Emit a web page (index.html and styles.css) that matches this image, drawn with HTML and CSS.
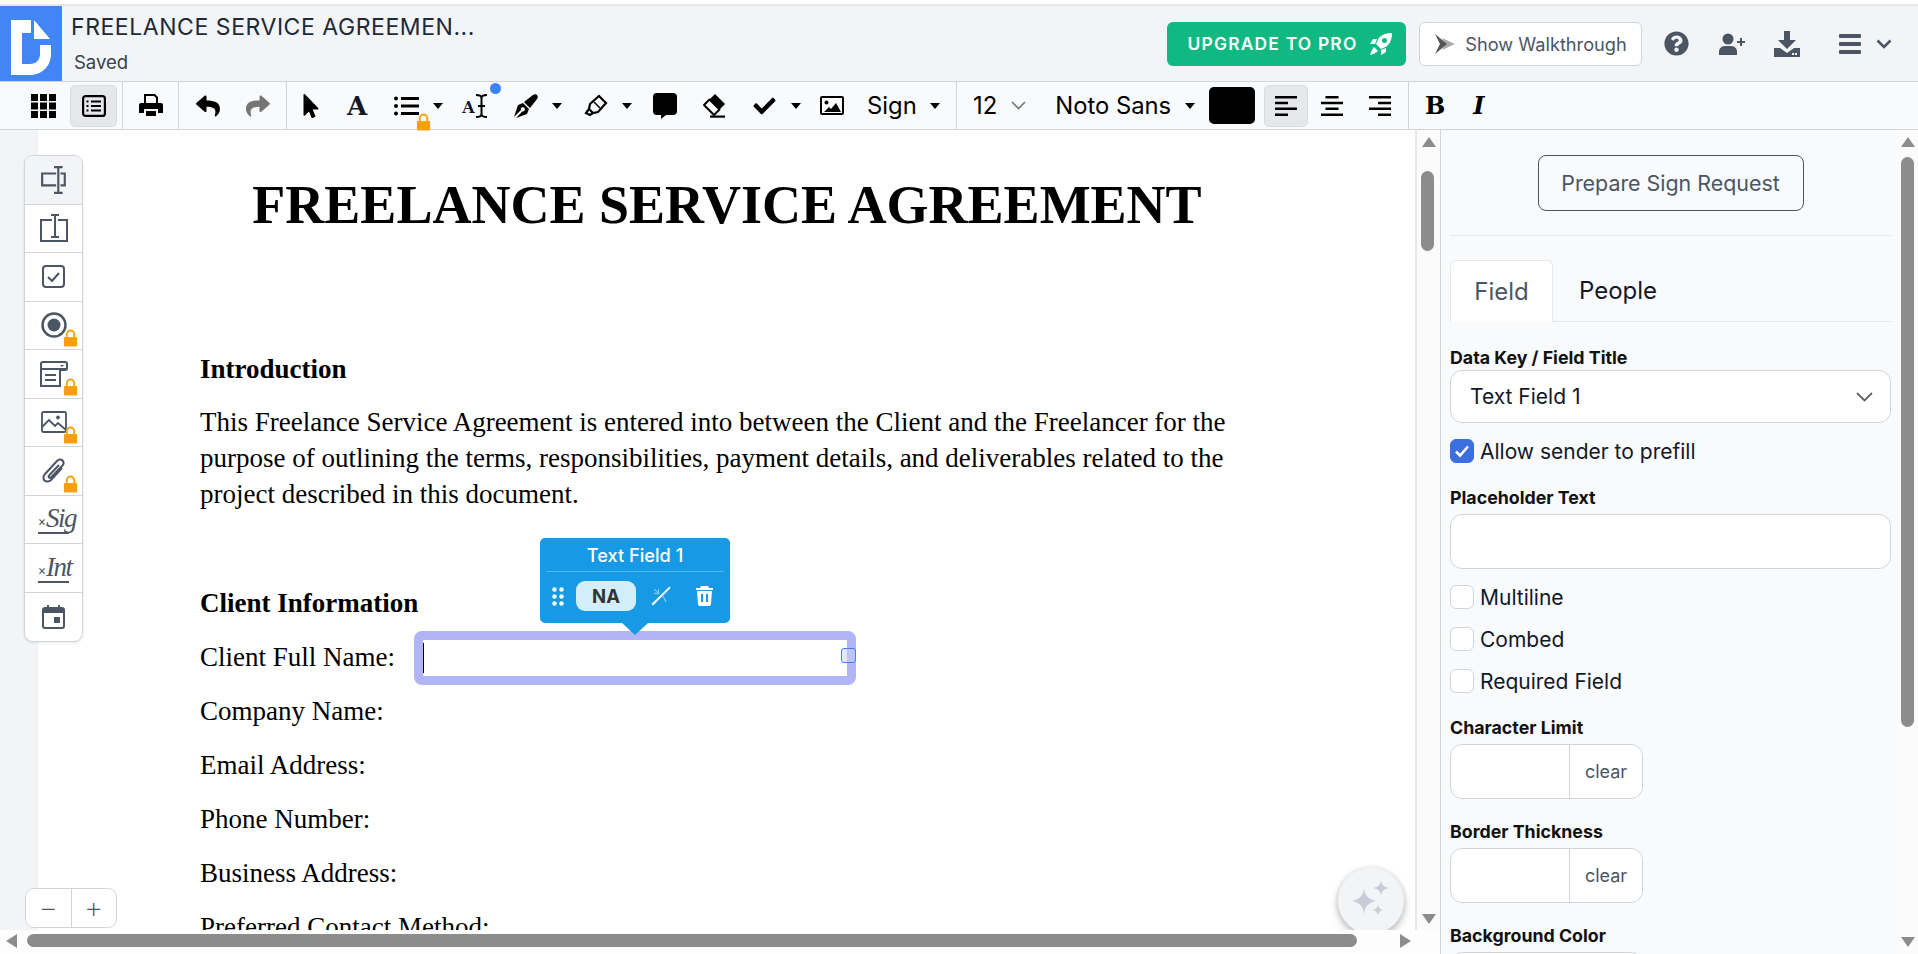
FILE: index.html
```html
<!DOCTYPE html>
<html lang="en">
<head>
  <meta charset="UTF-8">
  <title>Freelance Service Agreement</title>
  <link rel="stylesheet" href="styles.css">
</head>
<body>
<div class="app">

  <header class="header">
    <div class="logo">
      <svg width="62" height="75" viewBox="0 0 62 75"><path d="M11 14h20v13h-9v31h8c6 0 10-4 10-10v-9h11v9c0 12-9 21-21 21H11z" fill="#fff"/><path d="M34 14l16 19H34z" fill="#fff"/></svg>
    </div>
    <div class="doc-name">
      <div class="doc-title">FREELANCE SERVICE AGREEMEN...</div>
      <div class="doc-status">Saved</div>
    </div>
    <div class="header-actions">
      <button class="btn-upgrade">UPGRADE TO PRO
        <svg width="24" height="24" viewBox="0 0 24 24" fill="#fff"><path d="M23 1c-6 0-10 1.500-13.500 5.500L7 12l5 5 5.500-2.500C21.500 11 23 7 23 1zM15.500 6a2.500 2.500 0 1 1 0 5 2.500 2.500 0 0 1 0-5z" fill-rule="evenodd"/><path d="M8 7H4l-3 5h5zM17 16v4l-5 3v-5z"/><path d="M5 15l4 4c-2 2-5 3-8 4 1-3 2-6 4-8z"/></svg>
      </button>
      <button class="btn-walk">
        <svg width="22" height="24" viewBox="0 0 22 24"><path d="M8 6l13 6-13 6 3-6z" fill="#aaa"/><path d="M1 2l12 10L1 22l5-10z" fill="#555"/></svg>
        Show Walkthrough
      </button>
      <svg class="h-help" width="25" height="25" viewBox="0 0 512 512" fill="#4b5563"><path d="M504 256c0 136.997-111.043 248-248 248S8 392.997 8 256C8 119.083 119.043 8 256 8s248 111.083 248 248zM262.655 90c-54.497 0-89.255 22.957-116.549 63.758-3.536 5.286-2.353 12.415 2.715 16.258l34.699 26.31c5.205 3.947 12.621 3.008 16.665-2.122 17.864-22.658 30.113-35.797 57.303-35.797 20.429 0 45.698 13.148 45.698 32.958 0 14.976-12.363 22.667-32.534 33.976C247.128 238.528 216 254.941 216 296v4c0 6.627 5.373 12 12 12h56c6.627 0 12-5.373 12-12v-1.333c0-28.462 83.186-29.647 83.186-106.667 0-58.002-60.165-102-116.531-102zM256 338c-25.365 0-46 20.635-46 46 0 25.364 20.635 46 46 46s46-20.636 46-46c0-25.365-20.635-46-46-46z"/></svg>
      <svg class="h-user" width="26" height="22" viewBox="0 0 26 22" fill="#4b5563"><circle cx="9" cy="6" r="5.500"/><path d="M0 22v-3c0-4 3-6 6-6h6c3 0 6 2 6 6v3z"/><path d="M21 5h2v3h3v2h-3v3h-2v-3h-3V8h3z"/></svg>
      <svg class="h-down" width="26" height="26" viewBox="0 0 26 26" fill="#4b5563"><path d="M10 0h6v9h6l-9 9-9-9h6z"/><path d="M0 17h6l7 5 7-5h6v9H0z"/><rect x="18" y="22" width="2" height="2" fill="#f3f4f6"/><rect x="21" y="22" width="2" height="2" fill="#f3f4f6"/></svg>
      <svg class="h-menu" width="22" height="20" viewBox="0 0 22 20" fill="#4b5563"><rect y="0" width="22" height="4" rx="1"/><rect y="8" width="22" height="4" rx="1"/><rect y="16" width="22" height="4" rx="1"/></svg>
      <svg class="h-chev" width="16" height="10" viewBox="0 0 16 10" fill="none" stroke="#4b5563" stroke-width="2.500"><path d="M1.500 1.500L8 8l6.500-6.500"/></svg>
    </div>
  </header>

  <div class="toolbar">
    <div class="tb-group tb-view">
      <div class="tb-btn">
        <svg width="25" height="24" viewBox="0 0 25 24"><path d="M0 0h7v7H0zM9 0h7v7H9zM18 0h7v7h-7zM0 8.500h7v7H0zM9 8.500h7v7H9zM18 8.500h7v7h-7zM0 17h7v7H0zM9 17h7v7H9zM18 17h7v7h-7z"/></svg>
      </div>
      <div class="tb-btn is-on">
        <svg width="24" height="22" viewBox="0 0 24 22" fill="none" stroke="#000" stroke-width="2.200"><rect x="1.100" y="1.100" width="21.800" height="19.800" rx="2.500"/><path d="M9 6.500h10M9 11h10M9 15.500h10" /><path d="M4.500 6.500h2M4.500 11h2M4.500 15.500h2"/></svg>
      </div>
    </div>
    <div class="tb-group tb-print">
      <svg width="24" height="24" viewBox="0 0 24 24"><path d="M5 0h11l3 3v7h-2V4l-2-2H7v8H5zM2 9h20a2 2 0 0 1 2 2v8h-5v-4H5v4H0v-8a2 2 0 0 1 2-2zM7 17h10v5H7z"/></svg>
    </div>
    <div class="tb-group tb-history">
      <svg width="24" height="24" viewBox="0 0 512 512"><path d="M8.309 189.836L184.313 37.851C199.719 24.546 224 35.347 224 56.015v80.053c160.629 1.839 288 34.032 288 186.258 0 61.441-39.581 122.309-83.333 154.132-13.653 9.931-33.111-2.533-28.077-18.631 45.344-145.012-21.507-183.51-176.59-185.742V360c0 20.7-24.3 31.453-39.687 18.164l-176.004-152c-11.071-9.562-11.086-26.753 0-36.328z"/></svg>
      <svg width="24" height="24" viewBox="0 0 512 512" fill="#757575"><path transform="matrix(-1 0 0 1 512 0)" d="M8.309 189.836L184.313 37.851C199.719 24.546 224 35.347 224 56.015v80.053c160.629 1.839 288 34.032 288 186.258 0 61.441-39.581 122.309-83.333 154.132-13.653 9.931-33.111-2.533-28.077-18.631 45.344-145.012-21.507-183.51-176.59-185.742V360c0 20.7-24.3 31.453-39.687 18.164l-176.004-152c-11.071-9.562-11.086-26.753 0-36.328z"/></svg>
    </div>
    <div class="tb-group tb-tools">
      <svg width="16" height="24" viewBox="0 0 320 512"><path d="M302.189 329.126H196.105l55.831 135.993c3.889 9.428-.555 19.999-9.444 23.999l-49.165 21.427c-9.165 4-19.443-.571-23.332-9.714l-53.053-129.136-86.664 89.138C18.729 472.71 0 463.554 0 447.977V18.299C0 1.899 19.921-6.096 30.277 5.443l284.412 292.542c11.472 11.179 3.007 31.141-12.5 31.141z"/></svg>
      <span class="glyph-a">A</span>
      <span class="tb-list">
        <svg width="25" height="20" viewBox="0 0 25 20"><circle cx="2" cy="2.500" r="2"/><circle cx="2" cy="10" r="2"/><circle cx="2" cy="17.500" r="2"/><path d="M7 1h18v3H7zM7 8.500h18v3H7zM7 16h18v3H7z"/></svg>
        <svg class="lock lock-bar" width="15" height="18" viewBox="0 0 16 18"><path d="M1 8h14v10H1z" fill="#f99f0f"/><path d="M4 8V5a4 4 0 0 1 8 0v3" fill="none" stroke="#f99f0f" stroke-width="2"/></svg>
      </span>
      <i class="caret"></i>
      <span class="tb-ai"><span class="glyph-ai">A</span><svg width="13" height="24" viewBox="0 0 13 24" fill="none" stroke="#000" stroke-width="2"><path d="M1 1c3 0 5.500 1 5.500 3v16c0 2-2.500 3-5.500 3M12 1c-3 0-5.500 1-5.500 3v16c0 2 2.500 3 5.500 3M3 12h7"/></svg><b class="ai-dot"></b></span>
      <svg width="24" height="24" viewBox="0 0 24 24"><path d="M23 1c-1-1-3-1-4 0L10 8l6 6 7-9c1-1 1-3 0-4z"/><path d="M9 9l-5 2-4 12 7-7a2 2 0 1 1 1.500 1.300L2 24l11-4 2-5z"/></svg>
      <i class="caret"></i>
      <svg width="24" height="24" viewBox="0 0 24 24" fill="none" stroke="#000" stroke-width="2.200"><path d="M15 2l7 7-8 9-5 1-4-4 1-5z"/><path d="M5 15l-3 4 4 2 3-2"/><path d="M10 8l6 6" stroke-width="1.500"/></svg>
      <i class="caret"></i>
      <svg width="24" height="26" viewBox="0 0 24 26"><path d="M4 0h16a4 4 0 0 1 4 4v14a4 4 0 0 1-4 4h-7l-5 4v-4H4a4 4 0 0 1-4-4V4a4 4 0 0 1 4-4z"/></svg>
      <svg width="24" height="25" viewBox="0 0 24 25"><path d="M13 1l10 10-5.500 5.500L7.500 6.500z"/><path d="M7.500 6.500l10 10L12 22 2 12z" fill="none" stroke="#000" stroke-width="2" stroke-linejoin="round"/><rect x="8" y="22.500" width="15" height="2.200"/></svg>
      <svg width="25" height="22" viewBox="0 0 512 512"><path d="M173.898 439.404l-166.400-166.400c-9.997-9.997-9.997-26.206 0-36.204l36.203-36.204c9.997-9.998 26.207-9.998 36.204 0L192 312.690 432.095 72.596c9.997-9.997 26.207-9.997 36.204 0l36.203 36.204c9.997 9.997 9.997 26.206 0 36.204l-294.400 294.401c-9.998 9.997-26.207 9.997-36.204-.001z"/></svg>
      <i class="caret"></i>
      <svg width="24" height="19" viewBox="0 0 24 19"><path d="M2 0h20a2 2 0 0 1 2 2v15a2 2 0 0 1-2 2H2a2 2 0 0 1-2-2V2a2 2 0 0 1 2-2zm0 2v15h20V2z" fill-rule="evenodd"/><circle cx="6.500" cy="6.500" r="2"/><path d="M4 16l5-5 2 2 5-6 5 9z"/></svg>
      <span class="tb-drop">Sign <i class="caret"></i></span>
    </div>
    <div class="tb-group tb-format">
      <span class="tb-size">12</span>
      <svg width="15" height="9" viewBox="0 0 15 9" fill="none" stroke="#777" stroke-width="1.600"><path d="M1 1l6.500 6.500L14 1"/></svg>
      <span class="tb-drop tb-font">Noto Sans <i class="caret"></i></span>
      <span class="swatch"></span>
      <div class="tb-btn is-on tb-align">
        <svg width="22" height="20" viewBox="0 0 22 20"><path d="M0 0h22v2.500H0zM0 5.800h13v2.500H0zM0 11.500h22V14H0zM0 17.500h13V20H0z"/></svg>
      </div>
      <div class="tb-align-btn"><svg width="22" height="20" viewBox="0 0 22 20"><path d="M4.500 0h13v2.500h-13zM0 5.800h22v2.500H0zM4.500 11.500h13V14h-13zM0 17.500h22V20H0z"/></svg></div>
      <div class="tb-align-btn"><svg width="22" height="20" viewBox="0 0 22 20"><path d="M0 0h22v2.500H0zM9 5.800h13v2.500H9zM0 11.500h22V14H0zM9 17.500h13V20H9z"/></svg></div>
    </div>
    <div class="tb-group tb-style">
      <span class="glyph-b">B</span>
      <span class="glyph-i">I</span>
    </div>
  </div>

  <div class="main">
    <div class="doc-pane">
      <div class="doc-row">
        <div class="gutter"></div>
        <div class="page">
          <h1>FREELANCE SERVICE AGREEMENT</h1>
          <h2 class="first">Introduction</h2>
          <p>This Freelance Service Agreement is entered into between the Client and the Freelancer for the purpose of outlining the terms, responsibilities, payment details, and deliverables related to the project described in this document.</p>
          <h2 class="client">Client Information</h2>
          <div class="line">Client Full Name:
            <div class="text-field">
              <i class="text-caret"></i>
              <i class="field-handle"></i>
              <div class="popover">
                <div class="pop-title">Text Field 1</div>
                <div class="pop-row">
                  <svg width="12" height="19" viewBox="0 0 12 19" fill="#fff"><circle cx="2.500" cy="2.500" r="2.200"/><circle cx="9.500" cy="2.500" r="2.200"/><circle cx="2.500" cy="9.500" r="2.200"/><circle cx="9.500" cy="9.500" r="2.200"/><circle cx="2.500" cy="16.500" r="2.200"/><circle cx="9.500" cy="16.500" r="2.200"/></svg>
                  <span class="pop-pill">NA</span>
                  <svg class="pop-wand" width="20" height="20" viewBox="0 0 20 20"><path d="M18.500 0.500l1 1.500L2 19.500.5 18z" fill="#fff"/><path d="M7 3l1 4M3 7l4 1M13 12l-1.500-3M15 16l-2-4M3 3l5 5" stroke="#9fd6f5" stroke-width="1"/></svg>
                  <svg class="pop-trash" width="17" height="20" viewBox="0 0 17 20" fill="#fff"><path d="M5 0h7l1 2h4v2H0V2h4zM1 5h15l-1 13a2 2 0 0 1-2 2H4a2 2 0 0 1-2-2zm4 3v8h2V8zm5 0v8h2V8z" fill-rule="evenodd"/></svg>
                </div>
                <i class="pop-arrow"></i>
              </div>
            </div>
          </div>
          <div class="line">Company Name:</div>
          <div class="line">Email Address:</div>
          <div class="line">Phone Number:</div>
          <div class="line">Business Address:</div>
          <div class="line">Preferred Contact Method:</div>
        </div>
        <div class="v-scroll doc-scroll">
          <i class="arrow-up"></i>
          <i class="doc-thumb"></i>
          <i class="arrow-down"></i>
        </div>

        <div class="field-tools">
          <div class="ft-item is-on"><svg width="28" height="28" viewBox="0 0 26 26" fill="none" stroke="#4b5563" stroke-width="2"><path d="M15 7H2v11h13M19 7h4v11h-4"/><path d="M13 1h8M17 1v24M13 25h8"/></svg></div>
          <div class="ft-item"><svg width="28" height="28" viewBox="0 0 28 28" fill="none" stroke="#4b5563" stroke-width="2"><path d="M12 6H1v21h26V6h-9"/><path d="M11 1h8M15 1v22M11 23h8"/></svg></div>
          <div class="ft-item"><svg width="23" height="23" viewBox="0 0 23 23" fill="none" stroke="#4b5563" stroke-width="2"><rect x="1" y="1" width="21" height="21" rx="3"/><path d="M6 12l4 4 7-8"/></svg></div>
          <div class="ft-item"><svg width="26" height="26" viewBox="0 0 26 26"><circle cx="13" cy="13" r="11.500" fill="none" stroke="#4b5563" stroke-width="2.500"/><circle cx="13" cy="13" r="6.500" fill="#4b5563"/></svg>
            <svg class="lock" width="15" height="18" viewBox="0 0 16 18"><path d="M1 8h14v10H1z" fill="#f99f0f"/><path d="M4 8V5a4 4 0 0 1 8 0v3" fill="none" stroke="#f99f0f" stroke-width="2"/></svg></div>
          <div class="ft-item"><svg width="28" height="26" viewBox="0 0 28 26" fill="none" stroke="#4b5563" stroke-width="2"><path d="M20 9V25H1V3a2 2 0 0 1 2-2h22a2 2 0 0 1 2 2v4a2 2 0 0 1-2 2z"/><path d="M1 8h26M5 14h11M5 19h11"/><path d="M20 4h4l-2 2z" fill="#4b5563" stroke="none"/></svg>
            <svg class="lock" width="15" height="18" viewBox="0 0 16 18"><path d="M1 8h14v10H1z" fill="#f99f0f"/><path d="M4 8V5a4 4 0 0 1 8 0v3" fill="none" stroke="#f99f0f" stroke-width="2"/></svg></div>
          <div class="ft-item"><svg width="26" height="22" viewBox="0 0 26 22" fill="none" stroke="#4b5563" stroke-width="1.800"><rect x="1" y="1" width="24" height="20" rx="1.500"/><path d="M1 16l7-7 6 6 3-3 8 7"/><circle cx="17" cy="6.500" r="1" fill="#4b5563"/></svg>
            <svg class="lock" width="15" height="18" viewBox="0 0 16 18"><path d="M1 8h14v10H1z" fill="#f99f0f"/><path d="M4 8V5a4 4 0 0 1 8 0v3" fill="none" stroke="#f99f0f" stroke-width="2"/></svg></div>
          <div class="ft-item"><svg width="24" height="26" viewBox="0 0 24 26" fill="none" stroke="#4b5563" stroke-width="2"><path d="M20 10L9 22c-2 2-5 2-6.500.500S1 18 3 16L15 3c2-2 4-2 5.500-.500s1.500 3.500 0 5L9.500 19c-1 1-2 1-2.500.500s-.500-1.500.500-2.500L17 7"/></svg>
            <svg class="lock" width="15" height="18" viewBox="0 0 16 18"><path d="M1 8h14v10H1z" fill="#f99f0f"/><path d="M4 8V5a4 4 0 0 1 8 0v3" fill="none" stroke="#f99f0f" stroke-width="2"/></svg></div>
          <div class="ft-item ft-sign"><div class="ft-mark"><span class="ft-x">×</span><span class="ft-script">Sig</span></div></div>
          <div class="ft-item ft-sign"><div class="ft-mark"><span class="ft-x">×</span><span class="ft-script">Int</span></div></div>
          <div class="ft-item"><svg width="23" height="24" viewBox="0 0 23 24"><path d="M3 2h2V0h2v2h9V0h2v2h2a3 3 0 0 1 3 3v16a3 3 0 0 1-3 3H3a3 3 0 0 1-3-3V5a3 3 0 0 1 3-3zM2 8v13a1 1 0 0 0 1 1h17a1 1 0 0 0 1-1V8z" fill="#4b5563" fill-rule="evenodd"/><rect x="12" y="12" width="6" height="6" fill="#4b5563"/></svg></div>
        </div>

        <div class="zoom-box">
          <span class="zoom-btn">−</span>
          <span class="zoom-btn">+</span>
        </div>

        <div class="magic">
          <svg width="42" height="42" viewBox="0 0 42 42" fill="#c9ccd6"><path d="M14 8c1 8 4 11 12 13-8 2-11 5-12 13-1-8-4-11-12-13 8-2 11-5 12-13z"/><path d="M31 0c.700 5 2.500 7 8 8-5.500 1-7.300 3-8 8-.700-5-2.500-7-8-8 5.500-1 7.300-3 8-8z"/><path d="M28 24c.500 4 2 5.500 6 6-4 .500-5.500 2-6 6-.500-4-2-5.500-6-6 4-.500 5.500-2 6-6z"/></svg>
        </div>
      </div>
      <div class="h-scroll">
        <i class="arrow-left"></i>
        <i class="h-thumb"></i>
        <i class="arrow-right"></i>
      </div>
    </div>

    <aside class="panel">
      <div class="panel-body">
        <div class="prepare-wrap"><button class="btn-prepare">Prepare Sign Request</button></div>
        <div class="tabs">
          <span class="tab is-active">Field</span>
          <span class="tab">People</span>
        </div>

        <label class="f-label f-first">Data Key / Field Title</label>
        <div class="select">Text Field 1
          <svg width="17" height="10" viewBox="0 0 17 10" fill="none" stroke="#666" stroke-width="1.800"><path d="M1 1l7.500 7.500L16 1"/></svg>
        </div>
        <div class="check check-prefill">
          <span class="box is-checked"><svg width="16" height="14" viewBox="0 0 16 14" fill="none" stroke="#fff" stroke-width="2.600"><path d="M2 7.500l4 4 8-9"/></svg></span>
          Allow sender to prefill
        </div>

        <label class="f-label f-placeholder">Placeholder Text</label>
        <div class="input"></div>
        <div class="check-list">
          <div class="check"><span class="box"></span>Multiline</div>
          <div class="check"><span class="box"></span>Combed</div>
          <div class="check"><span class="box"></span>Required Field</div>
        </div>

        <label class="f-label">Character Limit</label>
        <div class="input-group"><span class="ig-input"></span><span class="ig-clear">clear</span></div>

        <label class="f-label">Border Thickness</label>
        <div class="input-group"><span class="ig-input"></span><span class="ig-clear">clear</span></div>

        <label class="f-label">Background Color</label>
        <div class="input-group"></div>
      </div>
      <div class="v-scroll panel-scroll">
        <i class="arrow-up"></i>
        <i class="panel-thumb"></i>
        <i class="arrow-down"></i>
      </div>
    </aside>
  </div>
</div>
</body>
</html>
```

FILE: styles.css
```css
* {
  box-sizing: border-box;
}
html, body {
  margin: 0;
  height: 100%;
  overflow: hidden;
}
body {
  font-family: Inter, "Liberation Sans", sans-serif;
  color: #111827;
  background: #fff;
}
button {
  font-family: inherit;
  cursor: pointer;
}
.app {
  height: 954px;
  display: flex;
  flex-direction: column;
  padding-top: 4px;
}

/* header */
.header {
  height: 77px;
  flex: none;
  display: flex;
  background: #f3f4f6;
  border-top: 2px solid #e5e7eb;
}
.logo {
  width: 62px;
  background: #4285f4;
}
.logo svg {
  display: block;
}
.doc-name {
  padding-left: 9px;
}
.doc-title {
  font-size: 23px;
  line-height: 28px;
  margin-top: 7px;
  letter-spacing: 0.55px;
  color: #1f2937;
  white-space: nowrap;
}
.doc-status {
  font-size: 18.500px;
  line-height: 22px;
  margin-top: 10px;
  margin-left: 3px;
  color: #374151;
}
.header-actions {
  margin-left: auto;
  display: flex;
  align-items: center;
  padding-right: 26px;
}
.btn-upgrade {
  width: 239px;
  height: 44px;
  padding: 0 0 0 8px;
  border: 0;
  border-radius: 6px;
  background: #10b981;
  color: #fff;
  font-size: 17.400px;
  font-weight: 600;
  letter-spacing: 1.2px;
  display: flex;
  align-items: center;
  justify-content: center;
  gap: 12px;
}
.btn-walk {
  width: 223px;
  height: 44px;
  margin-left: 13px;
  border: 1px solid #d1d5db;
  border-radius: 6px;
  background: #fff;
  color: #4b5563;
  font-size: 18.200px;
  display: flex;
  align-items: center;
  justify-content: center;
  gap: 9px;
}
.h-help { margin-left: 22px; }
.h-user { margin-left: 30px; }
.h-down { margin-left: 29px; }
.h-menu { margin-left: 39px; }
.h-chev { margin-left: 15px; }

/* toolbar */
.toolbar {
  height: 49px;
  flex: none;
  display: flex;
  background: #f9fafb;
  border-top: 1px solid #d1d5db;
  border-bottom: 1px solid #d1d5db;
}
.tb-group {
  display: flex;
  align-items: center;
  height: 100%;
  border-right: 1px solid #d1d5db;
}
.tb-btn {
  width: 47px;
  height: 42px;
  display: flex;
  align-items: center;
  justify-content: center;
  border-radius: 5px;
  border: 1px solid transparent;
}
.tb-btn.is-on {
  background: #e5e7eb;
  border-color: #d9dce1;
}
.tb-view {
  width: 123px;
  padding-left: 20px;
  gap: 3px;
}
.tb-print {
  width: 56px;
  justify-content: center;
}
.tb-history {
  width: 108px;
  justify-content: center;
  gap: 26px;
}
/* the drawing tools sit in a grid, each column sized to its icon */
.tb-tools {
  width: 670px;
  display: grid;
  grid-template-columns: 48px 44px 54px 17px 50px 52px 18px 52px 18px 50px 48px 53px 17px 48px auto;
  align-items: center;
  justify-items: center;
}
.tb-tools .caret {
  justify-self: start;
}
.caret {
  display: inline-block;
  width: 0;
  height: 0;
  border-left: 5.500px solid transparent;
  border-right: 5.500px solid transparent;
  border-top: 6px solid #000;
}
.glyph-a {
  font-family: "DejaVu Serif", serif;
  font-weight: 700;
  font-size: 26px;
  line-height: 1;
}
.tb-list {
  position: relative;
  display: flex;
}
.lock {
  position: absolute;
}
.lock-bar {
  left: 22px;
  top: 17px;
}
.tb-ai {
  position: relative;
  display: flex;
  align-items: center;
}
.glyph-ai {
  font-family: "DejaVu Serif", serif;
  font-weight: 700;
  font-size: 16px;
  margin-top: 3px;
}
.ai-dot {
  position: absolute;
  right: -13px;
  top: -11px;
  width: 11px;
  height: 11px;
  border-radius: 50%;
  background: #3b82f6;
}
.tb-drop {
  font-size: 23.800px;
  color: #000;
  white-space: nowrap;
  display: flex;
  align-items: center;
  gap: 13px;
  margin-left: 11px;
  justify-self: start;
}
.tb-format {
  width: 452px;
  padding-left: 16px;
}
.tb-size {
  font-size: 23.800px;
  color: #000;
  margin-right: 14px;
}
.tb-drop.tb-font {
  margin-left: 29px;
  gap: 14px;
}
.swatch {
  width: 46px;
  height: 37px;
  margin-left: 14px;
  border-radius: 5px;
  background: #000;
}
.tb-align {
  width: 44px;
  margin-left: 9px;
}
.tb-align-btn {
  width: 48px;
  display: flex;
  justify-content: center;
}
.tb-style {
  border-right: 0;
  padding-left: 16px;
  gap: 28px;
}
.glyph-b, .glyph-i {
  font-family: "DejaVu Serif", serif;
  font-size: 24px;
  line-height: 1;
  font-weight: 700;
  color: #000;
}
.glyph-i {
  font-style: italic;
}

/* main area */
.main {
  flex: 1;
  min-height: 0;
  display: flex;
}
.doc-pane {
  flex: 1;
  min-width: 0;
  display: flex;
  flex-direction: column;
}
.doc-row {
  position: relative;
  height: 800px;
  display: flex;
  overflow: hidden;
}
.gutter {
  width: 38px;
  flex: none;
  background: #f3f4f6;
}
.page {
  flex: 1;
  min-width: 0;
  padding: 45px 0 0 162px;
  font-family: "Liberation Serif", serif;
  font-size: 27px;
  line-height: 36px;
  color: #000;
}
.page h1 {
  margin: 0 0 116px -162px;
  width: 1378px;
  text-align: center;
  font-size: 54px;
  line-height: 60px;
}
.page h2 {
  margin: 0;
  font-size: 27px;
  line-height: 36px;
}
.page p {
  margin: 17px 0 0;
  width: 1050px;
}
.page h2.client {
  margin-top: 73px;
  margin-bottom: 9px;
}
.line {
  height: 54px;
  display: flex;
  align-items: center;
  gap: 19px;
  white-space: nowrap;
}
.text-field {
  position: relative;
  width: 442px;
  height: 54px;
  border: 9px solid #b1b4f5;
  border-radius: 8px;
  background: #fff;
  margin-top: 2px;
}
.text-caret {
  position: absolute;
  left: 0;
  top: 3px;
  width: 1px;
  height: 30px;
  background: #000;
}
.field-handle {
  position: absolute;
  right: -9px;
  top: 8px;
  width: 15px;
  height: 15px;
  border: 1px solid #3b82f6;
  border-radius: 3px;
  background: rgba(200, 210, 250, 0.5);
}
.popover {
  position: absolute;
  left: 117px;
  bottom: 53px;
  width: 190px;
  height: 85px;
  background: #169ae6;
  border-radius: 5px;
  font-family: Inter, sans-serif;
  color: #fff;
  padding: 0 6px;
}
.pop-title {
  height: 34px;
  line-height: 34px;
  text-align: center;
  font-size: 18.200px;
  font-weight: 500;
  border-bottom: 1px solid #55b6ee;
}
.pop-row {
  display: flex;
  align-items: center;
  padding-top: 9px;
  padding-left: 6px;
}
.pop-pill {
  width: 60px;
  height: 30px;
  margin-left: 12px;
  border-radius: 9px;
  background: #d3eefa;
  color: #333;
  font-size: 18.500px;
  font-weight: 700;
  line-height: 30px;
  text-align: center;
}
.pop-wand { margin-left: 15px; }
.pop-trash { margin-left: 25px; }
.pop-arrow {
  position: absolute;
  left: 82px;
  top: 85px;
  width: 0;
  height: 0;
  border-left: 13px solid transparent;
  border-right: 13px solid transparent;
  border-top: 12px solid #169ae6;
}

/* scrollbars */
.v-scroll {
  position: relative;
  flex: none;
  background: #fbfbfc;
}
.doc-scroll {
  width: 25px;
  border-left: 2px solid #e5e7eb;
}
.panel-scroll {
  width: 22px;
}
.arrow-up, .arrow-down, .arrow-left, .arrow-right {
  position: absolute;
  width: 0;
  height: 0;
}
.arrow-up, .arrow-down {
  left: 5px;
  border-left: 7px solid transparent;
  border-right: 7px solid transparent;
}
.arrow-up {
  top: 7px;
  border-bottom: 10px solid #8c8c8c;
}
.arrow-down {
  border-top: 10px solid #8c8c8c;
}
.doc-scroll .arrow-down {
  top: 784px;
}
.panel-scroll .arrow-down {
  top: 807px;
}
.doc-thumb, .panel-thumb, .h-thumb {
  position: absolute;
  display: block;
  background: #8c8c8c;
  border-radius: 7px;
}
.doc-thumb {
  left: 4px;
  top: 41px;
  width: 13px;
  height: 80px;
}
.panel-thumb {
  left: 5px;
  top: 27px;
  width: 13px;
  height: 570px;
}
.h-scroll {
  position: relative;
  height: 23px;
  background: #fdfdfd;
}
.h-thumb {
  left: 27px;
  top: 4px;
  width: 1330px;
  height: 13px;
}
.arrow-left, .arrow-right {
  top: 4px;
  border-top: 7px solid transparent;
  border-bottom: 7px solid transparent;
}
.arrow-left {
  left: 6px;
  border-right: 11px solid #8c8c8c;
}
.arrow-right {
  left: 1400px;
  border-left: 11px solid #8c8c8c;
}

/* floating field tools */
.field-tools {
  position: absolute;
  left: 24px;
  top: 25px;
  width: 59px;
  background: #fff;
  border: 1px solid #d1d5db;
  border-radius: 9px;
  box-shadow: 0 1px 3px rgba(0, 0, 0, 0.1);
}
.ft-item {
  position: relative;
  height: 48.500px;
  display: flex;
  align-items: center;
  justify-content: center;
  border-bottom: 1px solid #d1d5db;
}
.ft-item:last-child {
  border-bottom: 0;
}
.ft-item.is-on {
  background: #f3f4f6;
  border-radius: 8px 8px 0 0;
}
.ft-item .lock {
  right: 4px;
  bottom: 2px;
}
.ft-sign {
  color: #4b5563;
  font-family: "Liberation Serif", serif;
}
.ft-mark {
  display: flex;
  align-items: flex-end;
  width: 31px;
  border-bottom: 2px solid #4b5563;
  line-height: 1;
}
.ft-x {
  font-size: 14px;
  font-weight: 700;
  margin-bottom: 2px;
}
.ft-script {
  font-size: 27px;
  font-style: italic;
  line-height: 28px;
  letter-spacing: -1.500px;
}
.zoom-box {
  position: absolute;
  left: 25px;
  top: 758px;
  width: 92px;
  height: 40px;
  display: flex;
  background: #fff;
  border: 1px solid #d1d5db;
  border-radius: 9px;
  color: #4b5563;
}
.zoom-btn {
  flex: 1;
  text-align: center;
  font-size: 30px;
  font-weight: 200;
  line-height: 36px;
}
.zoom-btn + .zoom-btn {
  border-left: 1px solid #d1d5db;
}
.magic {
  position: absolute;
  left: 1338px;
  top: 738px;
  width: 66px;
  height: 66px;
  display: flex;
  align-items: center;
  justify-content: center;
  border-radius: 50%;
  background: #f3f4f6;
  box-shadow: 0 0 0 3px rgba(0, 0, 0, 0.03), 0 4px 8px rgba(0, 0, 0, 0.25);
}

/* right panel */
.panel {
  width: 478px;
  flex: none;
  display: flex;
  border-left: 1px solid #d1d5db;
  background: #f9fafb;
}
.panel-body {
  flex: 1;
  min-width: 0;
  padding: 25px 5px 0 9px;
  overflow: hidden;
}
.prepare-wrap {
  padding-bottom: 24px;
  border-bottom: 1px solid #e5e7eb;
  display: flex;
  justify-content: center;
}
.btn-prepare {
  width: 266px;
  height: 56px;
  background: transparent;
  border: 1px solid #4b5563;
  border-radius: 8px;
  color: #4b5563;
  font-size: 21.400px;
}
.tabs {
  margin-top: 24px;
  height: 62px;
  display: flex;
  border-bottom: 1px solid #e5e7eb;
}
.tab {
  height: 62px;
  padding: 0 26px;
  font-size: 24px;
  line-height: 61px;
  color: #111827;
}
.tab.is-active {
  width: 103px;
  background: #fff;
  color: #4b5563;
  border: 1px solid #e5e7eb;
  border-bottom: 0;
  border-radius: 6px 6px 0 0;
  padding: 0;
  text-align: center;
}
.f-label {
  display: block;
  margin-top: 21px;
  margin-bottom: 4px;
  font-size: 17.800px;
  line-height: 24px;
  font-weight: 700;
  color: #111;
}
.f-first {
  margin-top: 24px;
  margin-bottom: 0;
}
.f-placeholder {
  margin-top: 23px;
}
.select {
  height: 53px;
  padding: 0 17px 0 19px;
  display: flex;
  align-items: center;
  justify-content: space-between;
  background: #fff;
  border: 1px solid #d1d5db;
  border-radius: 12px;
  font-size: 21px;
}
.input {
  height: 55px;
  background: #fff;
  border: 1px solid #d1d5db;
  border-radius: 12px;
}
.check {
  height: 24px;
  display: flex;
  align-items: center;
  gap: 6px;
  font-size: 21px;
}
.check-prefill {
  margin-top: 16px;
}
/* bottom margin collapses with the next label's top margin */
.check-list {
  margin-top: 16px;
  margin-bottom: 23px;
  display: flex;
  flex-direction: column;
  gap: 18px;
}
.box {
  width: 24px;
  height: 24px;
  flex: none;
  display: flex;
  align-items: center;
  justify-content: center;
  background: #fff;
  border: 1px solid #d1d5db;
  border-radius: 6px;
}
.box.is-checked {
  background: #3b6fe0;
  border-color: #3b6fe0;
}
.input-group {
  width: 193px;
  height: 55px;
  display: flex;
  background: #fff;
  border: 1px solid #d1d5db;
  border-radius: 12px;
}
.ig-input {
  width: 119px;
  border-right: 1px solid #d1d5db;
}
.ig-clear {
  flex: 1;
  text-align: center;
  font-size: 18px;
  line-height: 53px;
  color: #4b5563;
}
```
